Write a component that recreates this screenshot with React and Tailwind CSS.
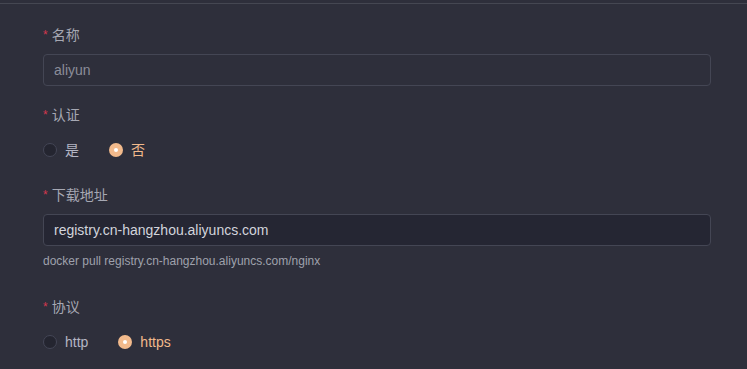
// Registry settings form — dark theme
function Label({ children }) {
  return (
    <div className="flex items-center h-[22px] mb-2 text-sm text-[#a6a8b3]">
      <span className="text-[#d4384f] mr-1 text-xs leading-none">*</span>
      {children}
    </div>
  );
}

function Radio({ checked, children }) {
  return (
    <label className="flex items-center mr-[30px]">
      {checked ? (
        <span className="w-[14px] h-[14px] rounded-full bg-[#f2ba8c] flex items-center justify-center">
          <span className="w-[4px] h-[4px] rounded-full bg-white" />
        </span>
      ) : (
        <span className="w-[14px] h-[14px] rounded-full bg-[#242530] border border-[#444656]" />
      )}
      <span className={'ml-2 text-sm ' + (checked ? 'text-[#f2ba8c]' : 'text-[#b4b6c4]')}>
        {children}
      </span>
    </label>
  );
}

export default function App() {
  return (
    <div
      className="min-h-screen w-[747px] h-[369px] overflow-hidden bg-[#2e2f3b] pt-[3px]"
      style={{ fontFamily: '"Liberation Sans", "Noto Sans CJK SC", sans-serif' }}
    >
      <div className="border-t border-[#454752] pl-[43px] pr-[36px] pt-[20px]">

        {/* 名称 */}
        <Label>名称</Label>
        <div className="h-8 rounded border border-[#444654] flex items-center px-[10px] text-sm text-[#8b8d99]">
          aliyun
        </div>

        {/* 认证 */}
        <div className="mt-[18px]">
          <Label>认证</Label>
          <div className="flex items-center h-8">
            <Radio>是</Radio>
            <Radio checked>否</Radio>
          </div>
        </div>

        {/* 下载地址 */}
        <div className="mt-[18px]">
          <Label>下载地址</Label>
          <div className="h-8 rounded border border-[#444654] bg-[#252633] flex items-center px-[10px] text-sm text-[#d2d4dc]">
            registry.cn-hangzhou.aliyuncs.com
          </div>
          <div className="mt-[6px] h-[18px] leading-[18px] text-xs text-[#9fa1ac]">
            docker pull registry.cn-hangzhou.aliyuncs.com/nginx
          </div>
        </div>

        {/* 协议 */}
        <div className="mt-[26px]">
          <Label>协议</Label>
          <div className="flex items-center h-8">
            <Radio>http</Radio>
            <Radio checked>https</Radio>
          </div>
        </div>

      </div>
    </div>
  );
}
